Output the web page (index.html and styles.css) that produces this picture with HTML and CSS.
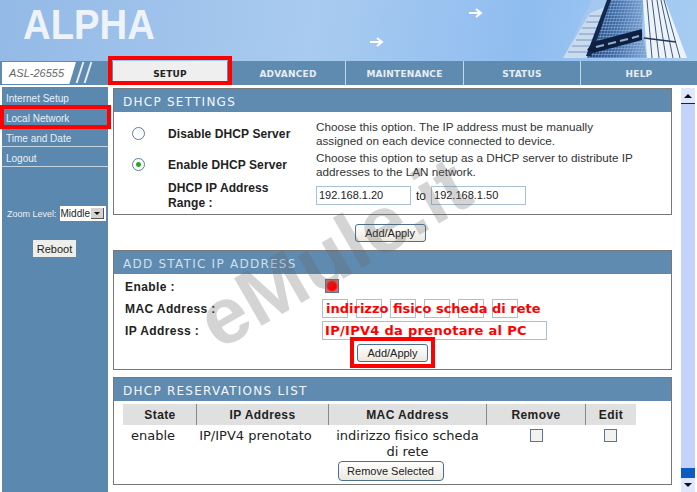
FILE: index.html
```html
<!DOCTYPE html>
<html lang="en">
<head>
    <meta charset="UTF-8">
    <meta name="viewport" content="width=device-width, initial-scale=1.0">
    <title>ALPHA ASL-26555 - DHCP</title>
    <link rel="stylesheet" href="styles.css">
</head>
<body>
    <div class="page">
        <div class="banner">
            <div class="logo"><span class="logo-text">ALPHA</span></div>
            <svg class="banner-art" width="337" height="61" viewBox="0 0 337 61">
                <defs>
                    <pattern id="grid" width="3" height="3" patternUnits="userSpaceOnUse" patternTransform="skewX(-14)">
                        <path d="M0 0H3M0 0V3" stroke="#a9c6e6" stroke-width="0.8" fill="none"/>
                    </pattern>
                    <linearGradient id="face" x1="0" y1="0" x2="1" y2="0">
                        <stop offset="0" stop-color="#1d3f78"/>
                        <stop offset="0.5" stop-color="#3f6ca8"/>
                        <stop offset="1" stop-color="#7fa6d6"/>
                    </linearGradient>
                </defs>
                <path d="M10 42h11M17 38l5 4-5 4" fill="none" stroke="#fff" stroke-width="2"/>
                <path d="M109 13h11M116 9l5 4-5 4" fill="none" stroke="#fff" stroke-width="2"/>
                <path d="M203 58L230 13L245 7L227 58Z" fill="#d3e1f1"/>
                <path d="M208 52H230M212 46H232M216 40H234M219 34H236M222 28H238M226 22H241M229 16H243" stroke="#5b7ba6" stroke-width="1"/>
                <path d="M232 0H248L227 58H203Z" fill="#b9d0ea" opacity="0.35"/>
                <path d="M227 58L248 0H283L282 30L287 58Z" fill="url(#face)"/>
                <path d="M227 58L248 0H283L282 30L287 58Z" fill="url(#grid)"/>
                <path d="M226 56L247 0H251L231 56Z" fill="#12294f"/>
                <path d="M227 50L233 42L282 29L282 40L233 53Z" fill="#0f1f3f"/>
                <path d="M236 47L244 45M248 44L256 42M260 41L268 39M272 38L279 36" stroke="#8fb0d8" stroke-width="2"/>
                <path d="M283 0H305L327 58H287Z" fill="#eef3f9"/>
                <path d="M287 0L292 58M292 0L299 58M297 0L306 58M301 0L313 58M304 0L320 58" stroke="#3d5a85" stroke-width="1" fill="none"/>
                <path d="M284 38L316 42" stroke="#22365c" stroke-width="1.5"/>
            </svg>
        </div>

        <div class="navbar">
            <div class="model-box">
                <div class="model">ASL-26555</div>
                <div class="slashes"><i></i><i></i></div>
            </div>
            <div class="tabs">
                <div class="tab tab-active"><span>SETUP</span></div>
                <div class="tab">ADVANCED</div>
                <div class="tab">MAINTENANCE</div>
                <div class="tab">STATUS</div>
                <div class="tab">HELP</div>
            </div>
        </div>

        <div class="body-row">
            <div class="sidebar">
                <div class="side-link">Internet Setup</div>
                <div class="side-link">Local Network</div>
                <div class="side-link">Time and Date</div>
                <div class="side-link">Logout</div>
                <div class="zoom-row">
                    <span>Zoom Level:</span>
                    <div class="zoom-select">Middle<b class="zoom-arrow"></b></div>
                </div>
                <div class="btn reboot">Reboot</div>
            </div>

            <div class="content">
                <div class="panel panel-settings">
                    <h2>DHCP SETTINGS</h2>
                    <div class="dhcp-row row-one">
                        <span class="radio"></span>
                        <div class="label label-low">Disable DHCP Server</div>
                        <div class="desc">Choose this option. The IP address must be manually assigned on each device connected to device.</div>
                    </div>
                    <div class="dhcp-row">
                        <span class="radio radio-on"></span>
                        <div class="label label-low">Enable DHCP Server</div>
                        <div class="desc">Choose this option to setup as a DHCP server to distribute IP addresses to the LAN network.</div>
                    </div>
                    <div class="dhcp-row">
                        <span></span>
                        <div class="label">DHCP IP Address Range :</div>
                        <div class="range">
                            <div class="field field-ip">192.168.1.20</div>
                            <span>to</span>
                            <div class="field field-ip">192.168.1.50</div>
                        </div>
                    </div>
                </div>

                <div class="btn-row btn-row-first"><div class="btn apply">Add/Apply</div></div>

                <div class="panel panel-static">
                    <h2 class="faded">ADD STATIC IP ADDRESS</h2>
                    <div class="static-row">
                        <div class="label">Enable :</div>
                        <span class="check check-red"></span>
                    </div>
                    <div class="static-row">
                        <div class="label">MAC Address :</div>
                        <div class="mac-fields">
                            <div class="field mac"></div>
                            <div class="field mac"></div>
                            <div class="field mac"></div>
                            <div class="field mac"></div>
                            <div class="field mac"></div>
                            <div class="field mac"></div>
                            <div class="mac-text">indirizzo fisico scheda di rete</div>
                        </div>
                    </div>
                    <div class="static-row">
                        <div class="label">IP Address :</div>
                        <div class="field field-red">IP/IPV4 da prenotare al PC</div>
                    </div>
                    <div class="btn-row btn-row-inner"><div class="btn apply">Add/Apply</div></div>
                </div>

                <div class="panel panel-list">
                    <h2>DHCP RESERVATIONS LIST</h2>
                    <table class="res-table">
                        <tr>
                            <th class="col-state">State</th>
                            <th class="col-ip">IP Address</th>
                            <th class="col-mac">MAC Address</th>
                            <th class="col-remove">Remove</th>
                            <th class="col-edit">Edit</th>
                        </tr>
                        <tr>
                            <td class="cell-shift">enable</td>
                            <td class="cell-shift">IP/IPV4 prenotato</td>
                            <td>indirizzo fisico scheda di rete</td>
                            <td><span class="check"></span></td>
                            <td><span class="check"></span></td>
                        </tr>
                    </table>
                    <div class="btn-row btn-row-remove"><div class="btn remove">Remove Selected</div></div>
                </div>
            </div>

            <div class="scrollbar">
                <div class="scroll-btn"><b class="arrow-up"></b></div>
                <div class="scroll-track"></div>
                <div class="scroll-thumb"></div>
                <div class="scroll-btn"><b class="arrow-down"></b></div>
            </div>
        </div>

        <div class="watermark">eMule.it</div>
        <div class="mark mark-setup"></div>
        <div class="mark mark-local"></div>
        <div class="mark mark-apply"></div>
    </div>
</body>
</html>
```

FILE: styles.css
```css
html, body {
    margin: 0;
    padding: 0;
    background-color: #fff;
}
.page {
    position: relative;
    width: 697px;
    height: 492px;
    overflow: hidden;
    font-family: "Liberation Sans", Arial, sans-serif;
    font-size: 12px;
    color: #222;
}

/* top banner */
.banner {
    display: flex;
    height: 61px;
    background: linear-gradient(100deg, #93b9e6 0%, #a9cbf0 45%, #8fbdf0 75%, #a8cdf3 100%);
}
.logo {
    box-sizing: border-box;
    width: 360px;
    padding-left: 23px;
}
.logo-text {
    display: block;
    width: 150px;
    transform: scaleX(0.89);
    transform-origin: left top;
    font-size: 43px;
    line-height: 48px;
    font-weight: bold;
    color: #eef3fa;
}
.banner-art {
    display: block;
}

/* nav row */
.navbar {
    display: flex;
    height: 24px;
    padding-left: 1px;
    border-bottom: 2px solid #fff;
    background-color: #5f8bb0;
}
.model-box {
    display: flex;
    width: 107px;
    padding-top: 1px;
}
.model {
    flex: none;
    box-sizing: border-box;
    width: 74px;
    height: 22px;
    margin-left: 1px;
    padding-left: 7px;
    background-color: #fff;
    clip-path: polygon(0 0, 100% 0, 91% 100%, 0 100%);
    font-style: italic;
    font-size: 11px;
    line-height: 22px;
    color: #666;
}
.slashes {
    display: flex;
    gap: 6px;
    padding: 0 0 0 3px;
}
.slashes i {
    display: block;
    width: 2px;
    height: 21px;
    background-color: #e8eff6;
    transform: skewX(-18deg);
}
.tabs {
    display: grid;
    grid-template-columns: 118px 115px 118px 117px 116px;
    flex: 1;
    margin-left: 5px;
}
.tab {
    display: flex;
    align-items: center;
    justify-content: center;
    padding-top: 1px;
    border-right: 1px solid #c6d8e6;
    font-family: "DejaVu Sans", sans-serif;
    font-size: 9px;
    font-weight: bold;
    letter-spacing: 0.2px;
    color: #e6eef5;
}
.tab:last-child {
    border-right: none;
}
.tab-active {
    margin-right: 4px;
    border-right: none;
    background-color: #efefef;
    color: #222;
}

/* page body */
.body-row {
    display: flex;
    height: 405px;
    padding-left: 2px;
}
.sidebar {
    flex: none;
    width: 106px;
    background-color: #5a88ae;
    color: #eaf0f6;
    font-size: 10px;
}
.side-link {
    height: 19px;
    padding-left: 4px;
    border-bottom: 1px solid #c3d5e3;
    line-height: 23px;
}
.zoom-row {
    display: flex;
    align-items: center;
    gap: 3px;
    margin-top: 39px;
    padding-left: 5px;
    font-size: 9px;
    white-space: nowrap;
}
.zoom-select {
    display: flex;
    align-items: center;
    justify-content: space-between;
    box-sizing: border-box;
    width: 46px;
    height: 15px;
    padding: 0 2px 0 1px;
    background-color: #fff;
    color: #222;
    font-size: 10px;
}
.zoom-arrow {
    display: flex;
    align-items: center;
    justify-content: center;
    box-sizing: border-box;
    width: 13px;
    height: 11px;
    background-color: #d6d3ce;
    border-right: 1px solid #555;
    border-bottom: 1px solid #555;
}
.zoom-arrow::after {
    content: "";
    border-left: 3px solid transparent;
    border-right: 3px solid transparent;
    border-top: 3px solid #111;
}
.btn {
    display: flex;
    align-items: center;
    justify-content: center;
    box-sizing: border-box;
    border: 1px solid #4a6f92;
    border-radius: 3px;
    background: linear-gradient(#fff, #ece9e0);
    color: #222;
    font-size: 11px;
}
.reboot {
    width: 43px;
    height: 17px;
    margin: 19px 0 0 31px;
    border: none;
    border-radius: 0;
    background: #eeeeea;
}

/* main column */
.content {
    flex: none;
    width: 559px;
    margin-left: 5px;
    padding-top: 1px;
}
.panel {
    box-sizing: border-box;
    border: 1px solid #777;
    background-color: #fff;
}
.panel h2 {
    height: 23px;
    margin: 0;
    padding-left: 9px;
    background-color: #5f8bb0;
    font-family: "DejaVu Sans", sans-serif;
    font-size: 12px;
    font-weight: normal;
    line-height: 26px;
    letter-spacing: 1.25px;
    color: #f4f7fa;
}
.panel-settings {
    height: 127px;
}
.panel-static {
    height: 120px;
}
.panel-list {
    height: 108px;
    margin-top: 7px;
}

.dhcp-row {
    display: grid;
    grid-template-columns: 54px 148px 1fr;
    align-items: center;
    height: 31px;
}
.row-one {
    margin-top: 6px;
}
.radio {
    display: block;
    width: 11px;
    height: 11px;
    margin-left: 18px;
    border: 1px solid #5a7fa0;
    border-radius: 50%;
    background-color: #fff;
}
.radio-on {
    background: radial-gradient(circle, #2aa82a 0 2px, #fff 3px);
}
.label {
    font-weight: bold;
    color: #222;
}
.dhcp-row .label {
    padding-right: 20px;
    line-height: 15px;
    letter-spacing: 0.1px;
}
.dhcp-row .label-low {
    padding-top: 2px;
}
.desc {
    padding-right: 33px;
    font-size: 11.7px;
    line-height: 14px;
    color: #333;
}
.range {
    display: flex;
    align-items: center;
    gap: 5px;
}
.field {
    box-sizing: border-box;
    border: 1px solid #a9bfd3;
    background-color: #fff;
}
.field-ip {
    width: 95px;
    height: 19px;
    padding-left: 2px;
    font-size: 11px;
    line-height: 17px;
}

.btn-row {
    display: flex;
    justify-content: center;
}
.btn-row-first {
    align-items: center;
    height: 35px;
    padding-right: 5px;
}
.apply {
    width: 71px;
    height: 18px;
}

/* static address form */
.panel-static h2.faded {
    color: #d3dfe9;
}
.static-row {
    display: flex;
    align-items: center;
    height: 22px;
    padding-left: 11px;
}
.static-row .label {
    width: 197px;
    padding-top: 2px;
    letter-spacing: 0.4px;
}
.panel-static h2 + .static-row {
    margin-top: 1px;
}
.check {
    display: inline-block;
    box-sizing: border-box;
    width: 13px;
    height: 13px;
    margin-top: 1px;
    border: 1px solid #56779a;
    background-color: #f2f2ee;
    vertical-align: top;
}
.check-red {
    width: 14px;
    height: 14px;
    margin: 0 0 0 3px;
    background: radial-gradient(circle, #f00 0 4px, #d66 6px);
}
.mac-fields {
    position: relative;
    display: flex;
    gap: 8px;
}
.mac {
    width: 26px;
    height: 19px;
}
.mac-text, .field-red {
    font-family: "DejaVu Sans", sans-serif;
    font-size: 13px;
    font-weight: bold;
    line-height: 17px;
    white-space: nowrap;
    color: #f00;
}
.mac-text {
    position: absolute;
    top: 1px;
    left: 4px;
}
.field-red {
    width: 225px;
    height: 19px;
    padding-left: 2px;
    letter-spacing: 0.3px;
}
.btn-row-inner {
    padding-top: 3px;
}

/* reservations table */
.res-table {
    width: 513px;
    margin: 3px 0 0 9px;
    border-collapse: collapse;
    table-layout: fixed;
}
.res-table th {
    height: 21px;
    padding: 0;
    border-left: 1px solid #888;
    background-color: #e0e0e0;
    font-size: 12px;
    letter-spacing: 0.4px;
    color: #222;
}
.res-table th:first-child {
    border-left-color: #e0e0e0;
}
.res-table td {
    padding: 3px 4px 0;
    text-align: center;
    vertical-align: top;
    font-family: "DejaVu Sans", sans-serif;
    font-size: 13px;
    line-height: 16px;
    color: #222;
}
.res-table td.cell-shift {
    padding: 3px 14px 0 0;
    white-space: nowrap;
}
.col-state { width: 72px; }
.col-ip { width: 131px; }
.col-mac { width: 157px; }
.col-remove { width: 98px; }
.btn-row-remove {
    margin-top: 1px;
    padding-right: 4px;
}
.remove {
    width: 106px;
    height: 20px;
    border-radius: 4px;
}

/* scrollbar */
.scrollbar {
    display: flex;
    flex-direction: column;
    flex: none;
    width: 14px;
    height: 404px;
    margin: 1px 0 0 9px;
    background-color: #c3d3fb;
}
.scroll-btn {
    display: flex;
    align-items: center;
    justify-content: center;
    height: 15px;
    border-bottom: 1px solid #222;
    background-color: #dfe8fd;
}
.scroll-btn:last-child {
    height: 14px;
    border-bottom: none;
}
.scroll-track {
    flex: 1;
}
.scroll-thumb {
    height: 10px;
    background-color: #0a5cc0;
}
.arrow-up, .arrow-down {
    width: 0;
    height: 0;
    border-left: 4px solid transparent;
    border-right: 4px solid transparent;
}
.arrow-up {
    border-bottom: 4px solid #111;
}
.arrow-down {
    border-top: 4px solid #111;
}

/* overlays on the screenshot */
.watermark {
    position: absolute;
    top: 213px;
    left: 185px;
    transform: rotate(-30deg);
    font-size: 80px;
    font-weight: bold;
    line-height: 80px;
    white-space: nowrap;
    color: rgba(100, 100, 100, 0.28);
}
.mark {
    position: absolute;
    box-sizing: border-box;
    border: 4px solid #f00;
}
.mark-setup {
    top: 56px;
    left: 108px;
    width: 124px;
    height: 29px;
}
.mark-local {
    top: 105px;
    left: 0;
    width: 111px;
    height: 24px;
}
.mark-apply {
    top: 337px;
    left: 350px;
    width: 85px;
    height: 31px;
}
```
